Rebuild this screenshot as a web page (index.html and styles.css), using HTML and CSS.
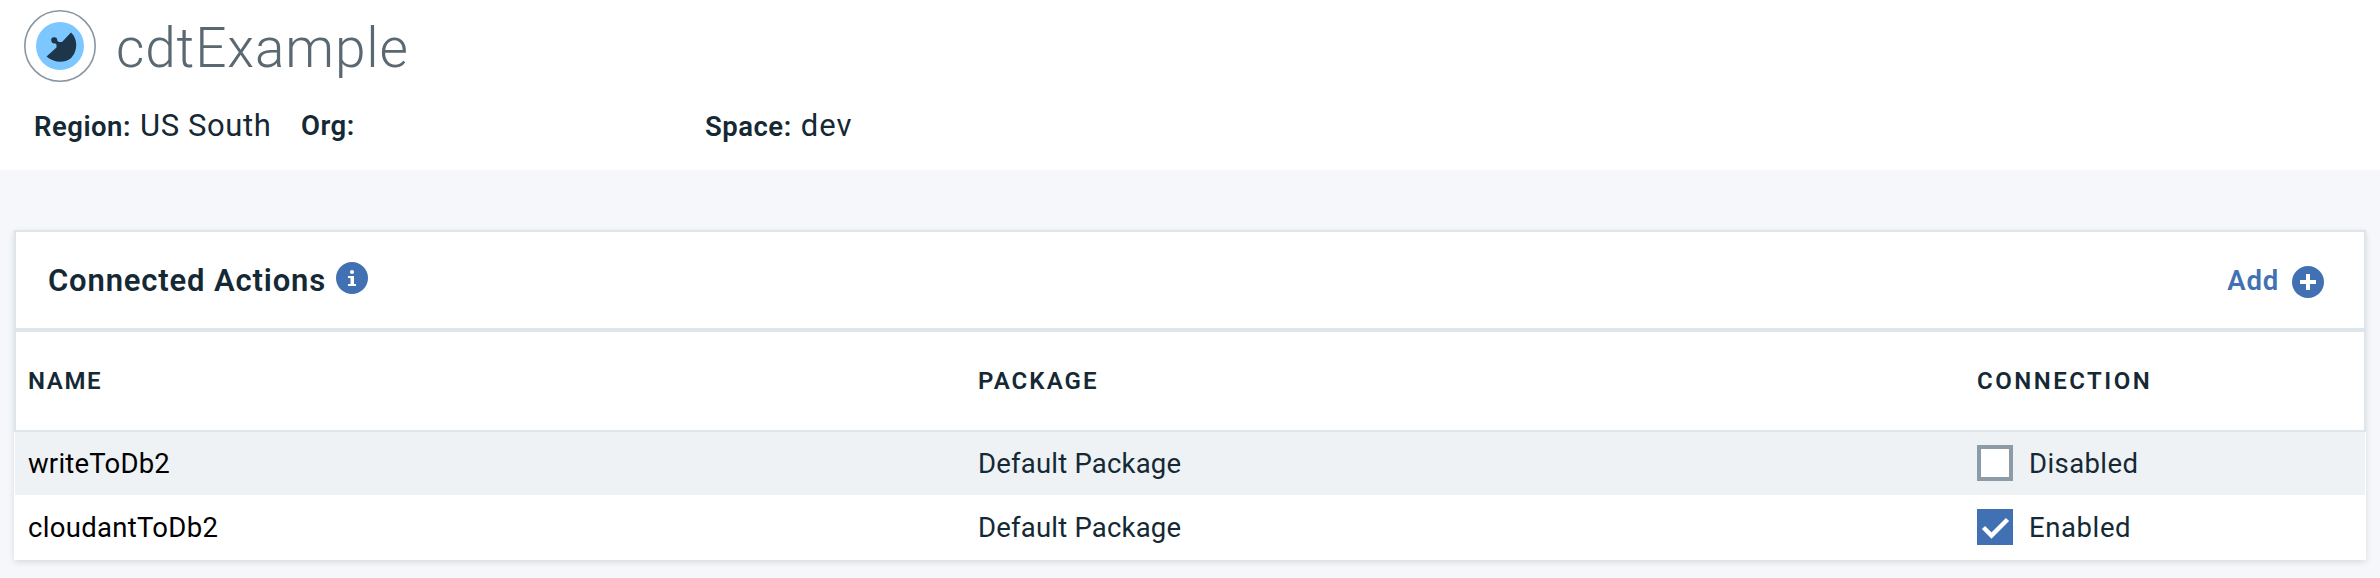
FILE: index.html
```
<!DOCTYPE html>
<html lang="en"><head><meta charset="utf-8"><title>cdtExample</title><link rel="stylesheet" href="styles.css"></head>
<body>
<header class="page-header">
  <div class="title-row">
    <svg class="trigger-icon" viewBox="0 0 72 72"><circle cx="36" cy="36" r="35.2" fill="#fff" stroke="#8897a2" stroke-width="1.6"/><circle cx="36" cy="36" r="24" fill="#7cc7ff"/><path d="M47 22.500C55 30 53 43 46.500 48.500C39 54 29 52 22.500 46.500L32.500 37.500V34.500L31 33.200A3 3 0 1 1 33.200 30.500L34.800 32H38Z" fill="#1d3649"/></svg>
    <h1 class="title">cdtExample</h1>
  </div>
  <div class="meta">
    <span class="meta-item region"><b class="label">Region:</b><span class="value">US South</span></span>
    <span class="meta-item org"><b class="label">Org:</b></span>
    <span class="meta-item space"><b class="label">Space:</b><span class="value">dev</span></span>
  </div>
</header>
<main class="card">
  <div class="card-head">
    <h2 class="card-title">Connected Actions</h2>
    <svg class="info" viewBox="0 0 32 32"><circle cx="16" cy="16" r="16" fill="#4171b2"/><circle cx="16" cy="10" r="2.100" fill="#fff"/><path d="M12 14H18V22H20V24H12V22H14.500V16H12Z" fill="#fff"/></svg>
    <a class="add">Add</a>
    <svg class="plus" viewBox="0 0 32 32"><circle cx="16" cy="16" r="16" fill="#4171b2"/><path d="M14 8H18V14H24V18H18V24H14V18H8V14H14Z" fill="#fff"/></svg>
  </div>
  <div class="row head"><span class="name">NAME</span><span class="package">PACKAGE</span><span class="connection">CONNECTION</span></div>
  <div class="row first"><span class="name">writeToDb2</span><span>Default Package</span><span class="state"><i class="box"></i><em class="off">Disabled</em></span></div>
  <div class="row"><span class="name cloud">cloudantToDb2</span><span>Default Package</span><span class="state"><i class="box checked"><svg viewBox="0 0 36 36"><path d="M6.500 18.500L14.500 26.500L30.500 10.500" fill="none" stroke="#fff" stroke-width="4.500"/></svg></i><em class="on">Enabled</em></span></div>
</main>
</body></html>
```

FILE: styles.css
```
*{box-sizing:border-box}
body{margin:0;height:578px;background:#f5f7fb;color:#152935;font-family:Roboto,sans-serif;overflow:hidden}
.page-header{height:170px;background:#fff;padding:10px 24px 0}
.title-row{display:flex;height:72px}
.trigger-icon{width:72px;height:72px}
.title{margin:6px 0 0 20px;font-size:55px;font-weight:300;line-height:64px;color:#5a6872;letter-spacing:.85px}
.meta{display:flex;padding:24px 0 0 10px;height:60px;line-height:40px}
.label{font-size:27.500px;font-weight:600;letter-spacing:.5px}
.value{font-size:31px;font-weight:400;letter-spacing:.6px}
.meta-item{display:flex;align-items:baseline}
.region{width:267px}.org{width:404px}
.label+.value{margin-left:9px}
.space .value{letter-spacing:1px}
.card{margin:60px 14px 0;height:330px;background:#fff;box-shadow:0 2px 6px rgba(0,0,0,.12)}
.card-head{display:flex;height:100px;border:2px solid #dfe6eb;padding:0 40px 0 32px}
.card-title{margin:29px 0 0;font-size:31px;font-weight:600;line-height:40px;letter-spacing:.84px}
.info{width:32px;height:32px;margin:30px 0 0 10px}
.add{margin:29px 13px 0 auto;color:#4171b2;font-size:27.500px;font-weight:600;line-height:40px;letter-spacing:.8px}
.plus{width:32px;height:32px;margin-top:34px}
.row{display:grid;grid-template-columns:950px 998px 1fr;margin:0 1px;padding-left:13px;font-size:27.500px;font-weight:380;line-height:38px;height:64px;padding-top:13px;letter-spacing:.2px}
.row.head{height:102px;margin:0;padding:30px 0 0 12px;border:2px solid #dfe6eb;font-size:24px;font-weight:600;letter-spacing:2.1px}
.head .name{letter-spacing:1.6px}
.head .connection{padding-left:1px;letter-spacing:2.500px}
.first{background:#eef2f5;height:63px}
.name{color:#000}.head .name{color:#152935}
.cloud{letter-spacing:.3px}
.state{display:flex;gap:16px;padding-left:1px}
.state em{font-style:normal}
.off{letter-spacing:.4px}
.on{letter-spacing:.6px}
.box{width:36px;height:36px;background:#fff;border:4px solid #8c9ba5}
.checked{border:0;background:#4171b2;margin-top:1px}
.checked svg{display:block}
.row:last-child{line-height:39px}
```
